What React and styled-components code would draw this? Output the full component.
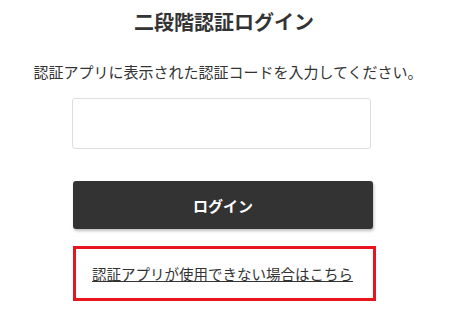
import styled, { createGlobalStyle } from "styled-components";

const Global = createGlobalStyle`
  body {
    margin: 0;
    background: #fff;
    font-family: "Noto Sans CJK JP", "Noto Sans", sans-serif;
    color: #333;
  }
`;

const Page = styled.div`
  width: 450px;
  display: flex;
  flex-direction: column;
  align-items: center;
  padding-top: 8px;
`;

const Title = styled.h1`
  margin: 0 2px 0 0;
  font-size: 20px;
  line-height: 28px;
  font-weight: bold;
  color: #333;
`;

const Lead = styled.p`
  margin: 25px 0 0 6px;
  font-size: 15px;
  line-height: 22px;
  color: #333;
`;

const Form = styled.div`
  align-self: flex-start;
  margin-left: 72px;
  width: 305px;
  display: flex;
  flex-direction: column;
`;

const CodeInput = styled.input`
  box-sizing: border-box;
  width: 299px;
  height: 51px;
  margin-top: 15px;
  border: 1px solid #ddd;
  border-radius: 3px;
  font-size: 16px;
  padding: 0 12px;
  outline: none;
`;

const LoginButton = styled.button`
  box-sizing: border-box;
  width: 300px;
  height: 48px;
  margin: 32px 0 0 1px;
  border: none;
  border-radius: 3px;
  background: #333;
  color: #fff;
  font-family: inherit;
  font-size: 15px;
  font-weight: bold;
  box-shadow: 1px 2px 3px rgba(0, 0, 0, 0.25);
  cursor: pointer;
`;

const Notice = styled.div`
  box-sizing: border-box;
  width: 303px;
  height: 55px;
  margin: 17px 0 0 1px;
  border: 3px solid #e8151f;
  display: flex;
  align-items: center;
  justify-content: center;
`;

const HelpLink = styled.a`
  font-size: 14.5px;
  line-height: 20px;
  color: #333;
  text-decoration: underline;
  margin-right: 4px;
`;

export default function App() {
  return (
    <>
      <Global />
      <Page>
        <Title>二段階認証ログイン</Title>
        <Lead>認証アプリに表示された認証コードを入力してください。</Lead>
        <Form>
          <CodeInput type="text" />
          <LoginButton>ログイン</LoginButton>
          <Notice>
            <HelpLink href="#">認証アプリが使用できない場合はこちら</HelpLink>
          </Notice>
        </Form>
      </Page>
    </>
  );
}
